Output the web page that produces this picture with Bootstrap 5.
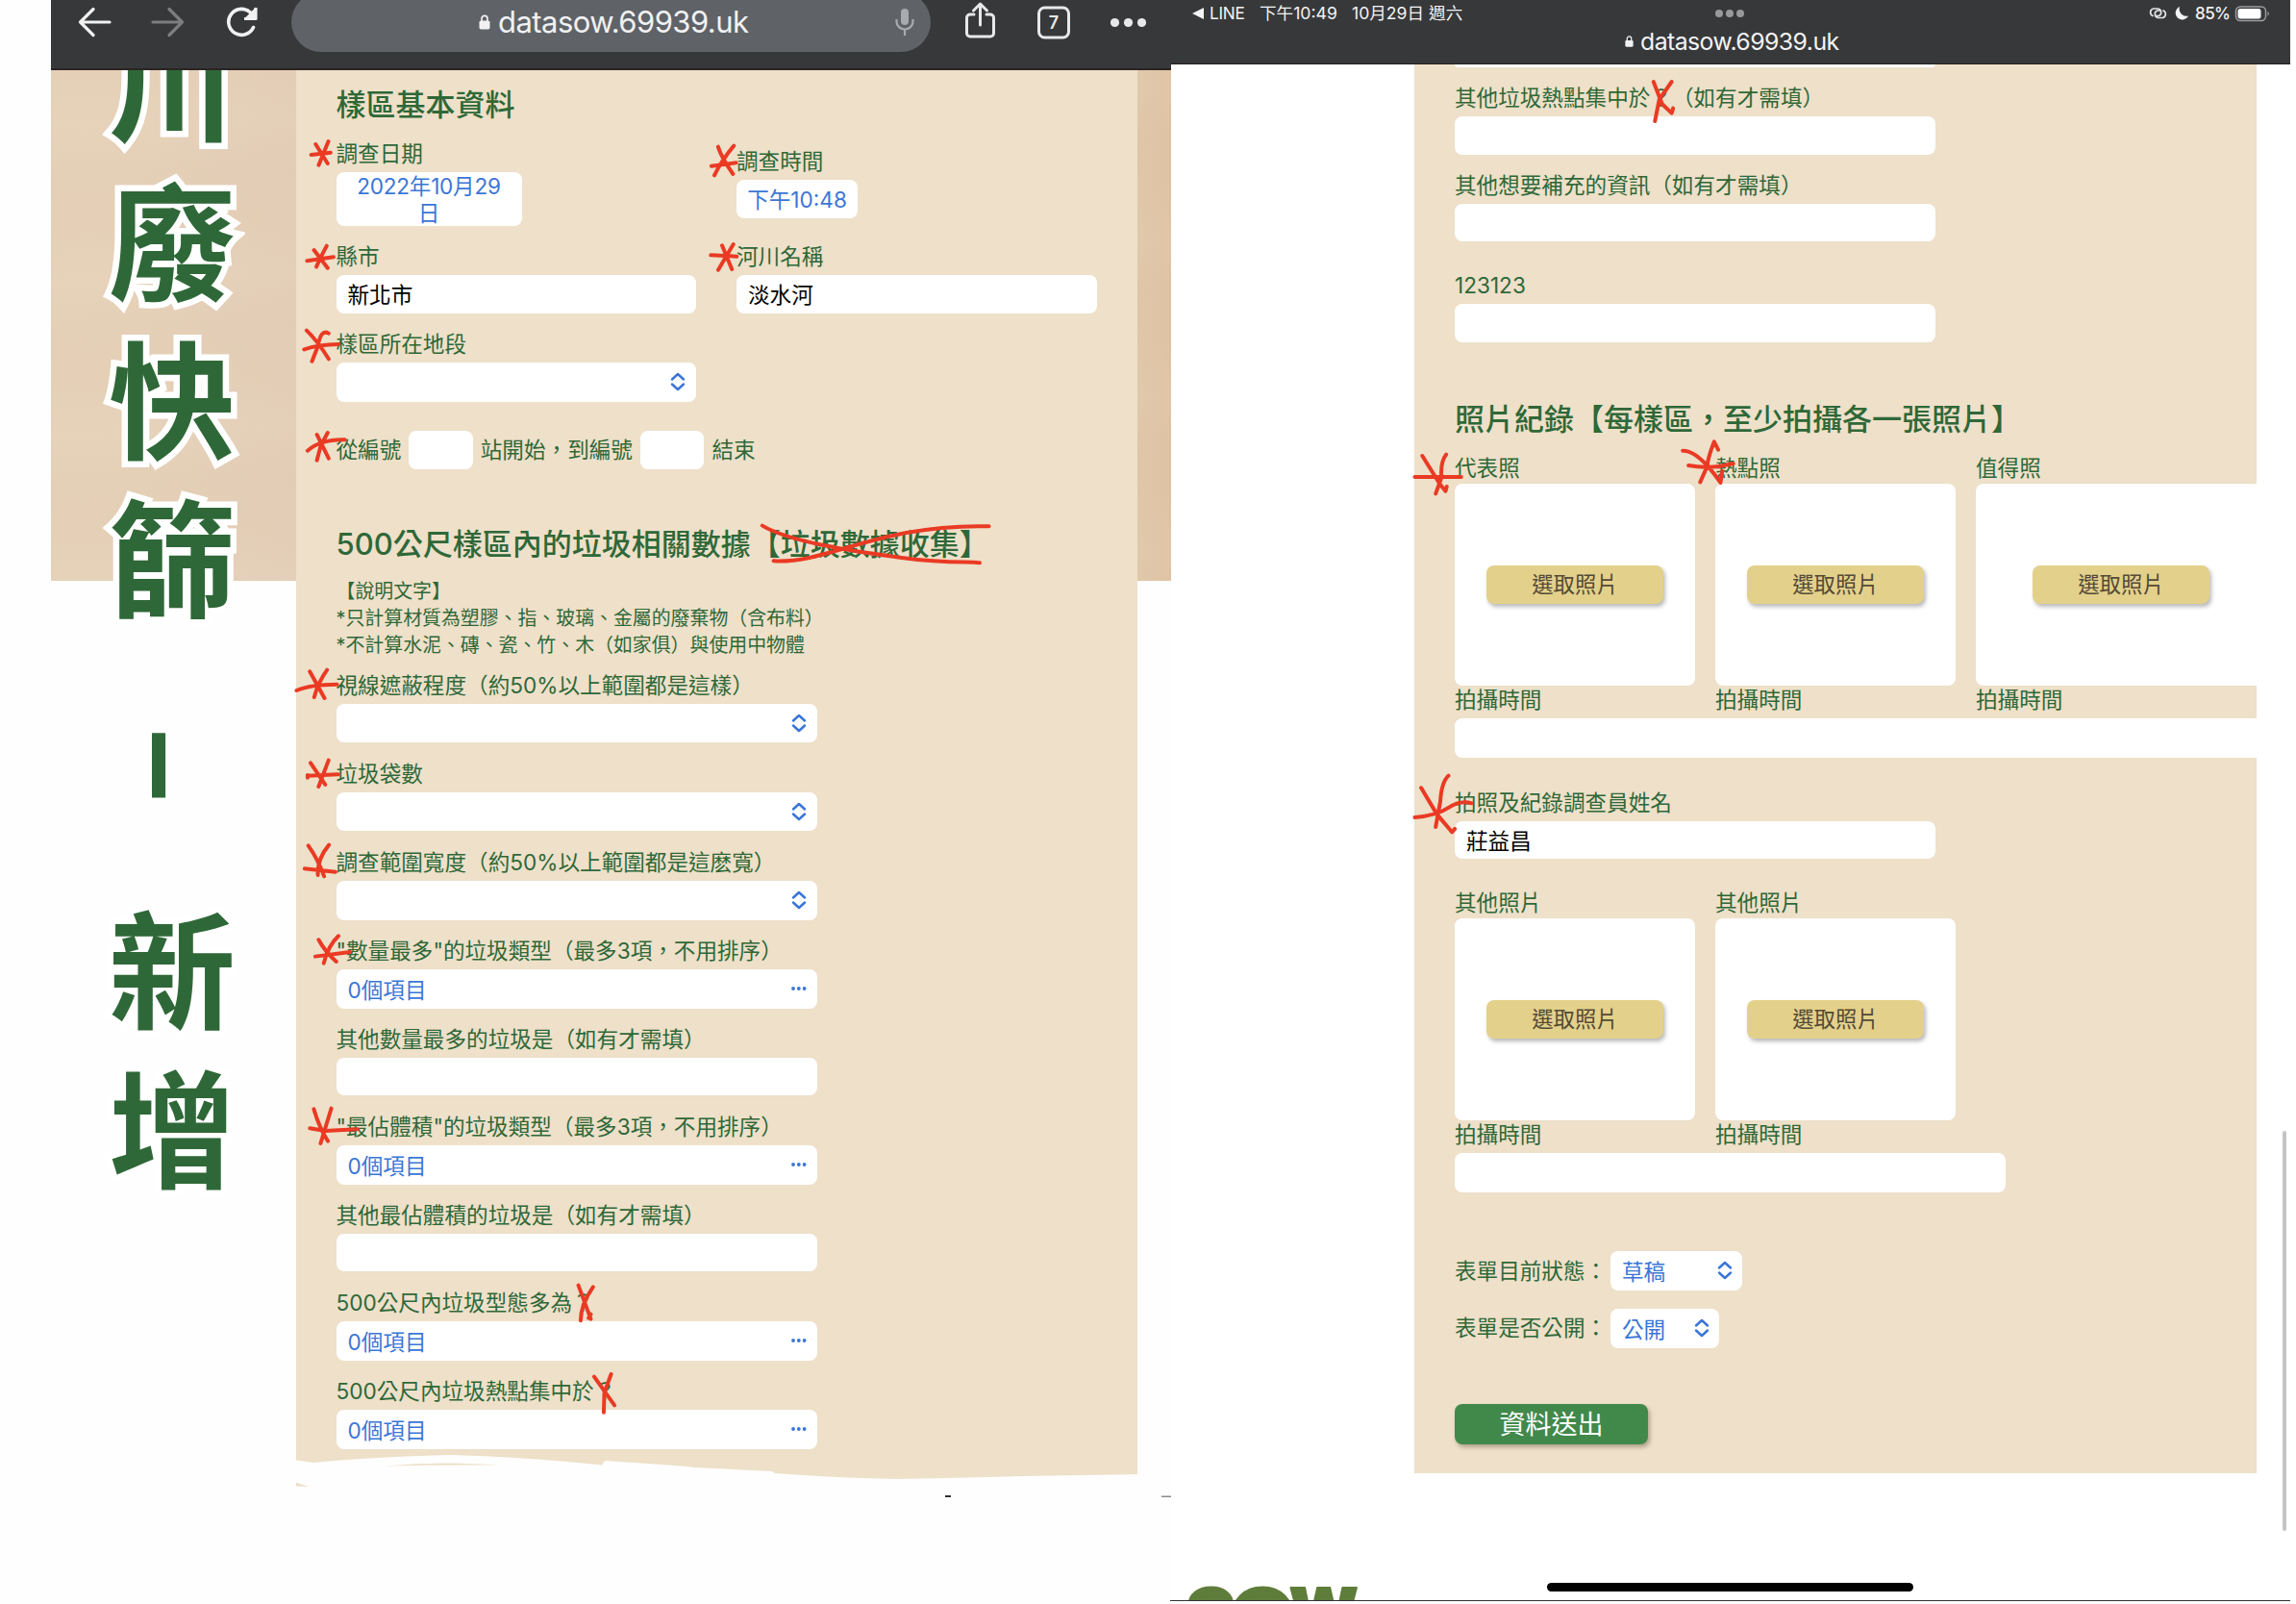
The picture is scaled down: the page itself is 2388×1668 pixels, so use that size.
<!DOCTYPE html>
<html lang="zh-Hant">
<head>
<meta charset="utf-8">
<title>川廢快篩 - 新增</title>
<link href="https://cdn.jsdelivr.net/npm/bootstrap@5.3.0/dist/css/bootstrap.min.css" rel="stylesheet">
<style>
:root{--leaf:#2f6838;--sand:#eee0c9;--bar:#37383a;--sky:#3b76d6}
body{width:2388px;height:1668px;overflow:hidden;background:#fefefe;font-family:Inter,"Noto Sans CJK TC",sans-serif;font-size:22.6px;line-height:30px;color:var(--leaf)}
svg{display:block;flex:none}
.pane-left{width:1165px;margin-left:53px;height:1668px;flex:none}
.pane-right{width:1170px;height:1668px;flex:none}
.bar-left{height:73px;background:var(--bar);z-index:2;border-bottom:2px solid #2b2523}
.pill{width:665px;height:62px;margin-top:-8px;border-radius:31px;background:#5f6368;color:#f1f1f2;font-size:31px;letter-spacing:-.55px}
.bar-right{height:67px;width:1164px;background:var(--bar);color:#f3f3f4;z-index:2;border-bottom:1px solid #261d1b}
.status-row{height:28px;font-size:17.2px;line-height:28px}
.wood{height:531px;left:0;right:0;top:73px;background:
 repeating-linear-gradient(178deg,rgba(225,200,160,.05) 0,rgba(255,240,220,.06) 60px,rgba(215,185,160,.05) 110px,rgba(225,200,160,.05) 160px),
 linear-gradient(90deg,#e5d0b8 0 8%,#e3cdb7 22%,#e0c9ae 95%,#dec3a3)}
.side-title{width:254.5px;padding-left:60px;margin-top:-66px;font-size:132px;font-weight:700;z-index:1}
.side-title span{display:block;width:136px;height:165px;line-height:165px;position:relative;z-index:0;color:var(--leaf)}
.side-title span[data-c]::before{content:attr(data-c);position:absolute;inset:0;z-index:-1;color:#fff;-webkit-text-stroke:13px #fff}
.side-title .dash{height:263px;width:148px;line-height:148px;font-size:150px;padding-bottom:6px;writing-mode:vertical-rl;text-align:center;font-family:"Noto Sans CJK TC"}
.sheet-left{width:875.5px;height:1474px;padding:16px 42px 0;background:var(--sand);position:relative}
.sheet-right{width:876px;height:1465px;margin-left:253px;padding-left:42px;background:var(--sand);overflow:hidden}
.sec-title{font-size:31px;line-height:40px;font-weight:500;color:var(--leaf);margin:0;white-space:nowrap}
.note-text{font-size:19.9px;line-height:28px;margin:15px 0 12.6px;white-space:nowrap}
.fld{margin-bottom:17.4px}
.cap{display:block;height:34px;white-space:nowrap}
.box,.pick{background:#fff;border-radius:8px;height:39.5px;padding:0 12px;display:flex;align-items:center;color:#000;line-height:39px;padding-top:2px}
.pick{height:40.7px;justify-content:space-between;color:var(--sky);padding-right:11px}
.pick svg{margin-top:-3px}
.w374{width:374.5px}.w500{width:500px}.w67{width:66.5px}
.shot{background:#fff;border-radius:8px;height:210px;width:250px}
.shot-wide{width:302px}
.btn-shot{width:184px;height:40px;padding:0;background:#e3d18b;color:#544a36;border:0;border-radius:8px;font-size:22.4px;line-height:40px;box-shadow:2px 3px 4px rgba(0,0,0,.28)}
.btn-send{width:201px;height:42px;padding:0;background:#41894b;color:#fff;border:0;border-radius:8px;font-size:27px;line-height:44px;box-shadow:2px 3px 4px rgba(60,50,20,.35)}
.shots{gap:21px}
.home-bar{left:391px;top:1645.5px;width:381px;height:9px;border-radius:5px;background:#000}
.scroll-thumb{left:1156px;top:1176px;width:4px;height:416px;border-radius:2px;background:#c4c4c4}
.logo-cut{left:-1px;top:1640px;height:25px;width:1165px;overflow:hidden;border-bottom:1.5px solid #333}
.ink{left:0;top:0;z-index:5;pointer-events:none}
.ink .pen path{fill:none;stroke:#ea3a24;stroke-width:4;stroke-linecap:round;stroke-linejoin:round;vector-effect:non-scaling-stroke}
</style>
<script src="https://cdn.jsdelivr.net/npm/bootstrap@5.3.0/dist/js/bootstrap.bundle.min.js"></script>
</head>
<body class="position-relative">
<svg width="0" height="0" class="position-absolute">
 <symbol id="updown" viewBox="0 0 16 20"><path d="M2 7.500 8 2l6 5.500M2 12.500 8 18l6-5.500" fill="none" stroke="#3b76d6" stroke-width="2.500" stroke-linecap="round" stroke-linejoin="round"/></symbol>
 <symbol id="more" viewBox="0 0 16 4"><g fill="#3b76d6"><circle cx="2" cy="2" r="1.900"/><circle cx="7.800" cy="2" r="1.900"/><circle cx="13.600" cy="2" r="1.900"/></g></symbol>
 <symbol id="lock" viewBox="0 0 12 16"><rect x="0.500" y="6.500" width="11" height="9" rx="1.800" fill="#f1f1f2"/><path d="M3 7V4.300a3 3 0 0 1 6 0V7" fill="none" stroke="#f1f1f2" stroke-width="1.700"/></symbol>
</svg>

<main class="d-flex">
 <section class="pane-left position-relative d-flex flex-column">
  <header class="bar-left position-relative flex-shrink-0 d-flex">
   <svg width="250" height="60" viewBox="53 0 250 60" fill="none" stroke-width="3.200" stroke-linecap="round" stroke-linejoin="round">
    <path d="M114 23H84M97 9.500 83.500 23 97 36.500" stroke="#f1f1f2"/>
    <path d="M159 23h30M176 9.500 189.500 23 176 36.500" stroke="#7d7e80"/>
    <path d="M263.500 28.500A13.500 13.500 0 1 1 261 13.500L265 17.500" stroke="#f1f1f2" stroke-width="3.600"/><path d="M266 7.500v12h-12z" fill="#f1f1f2" stroke="none"/><path d="M266 8v11.500h-12" stroke="#f1f1f2" stroke-linecap="butt"/>
   </svg>
   <div class="pill position-relative d-flex align-items-center">
    <svg width="12" height="16" style="margin-left:195px"><use href="#lock"/></svg>
    <span class="ms-2">datasow.69939.uk</span>
    <svg class="ms-auto" width="20" height="28" viewBox="0 0 20 28" style="margin-right:17px"><rect x="6" y="0" width="8" height="17" rx="4" fill="#a9aaad"/><path d="M1.500 11v2.500a8.500 8 0 0 0 17 0V11M10 21.500V28" fill="none" stroke="#a9aaad" stroke-width="2.200"/></svg>
   </div>
   <svg width="245" height="60" viewBox="968 0 245 60" fill="none" stroke="#e8e8ea" stroke-width="3" stroke-linecap="round" stroke-linejoin="round">
    <path d="M1013 15h-4a3.500 3.500 0 0 0-3.500 3.500v16a3.500 3.500 0 0 0 3.500 3.500h21a3.500 3.500 0 0 0 3.500-3.500v-16a3.500 3.500 0 0 0-3.500-3.500h-4M1019.500 26V5M1012.500 11l7-7 7 7"/>
    <rect x="1080.500" y="8" width="31" height="31" rx="6"/>
    <text x="1096" y="30" text-anchor="middle" font-family="Inter" font-weight="600" font-size="18" fill="#e8e8ea" stroke="none">7</text>
    <g fill="#e8e8ea" stroke="none"><circle cx="1159.500" cy="23.500" r="4.600"/><circle cx="1173.500" cy="23.500" r="4.600"/><circle cx="1187.500" cy="23.500" r="4.600"/></g>
   </svg>
  </header>
  <div class="wood position-absolute"></div>
  <div class="d-flex">
   <h1 class="side-title mb-0 position-relative flex-shrink-0">
    <span data-c="川">川</span><span data-c="廢">廢</span><span data-c="快">快</span><span data-c="篩">篩</span><span class="dash">–</span><span data-c="新">新</span><span data-c="增">增</span>
   </h1>
   <form class="sheet-left flex-shrink-0">
    <h2 class="sec-title mb-3">樣區基本資料</h2>
    <div class="d-flex align-items-center" style="gap:42px;margin-bottom:17px">
     <div class="w374"><label class="cap">調查日期</label><div class="box justify-content-center text-center" style="width:193px;height:56px;line-height:28px;color:var(--sky);padding:1px 18px 0;letter-spacing:-.25px">2022年10月29日</div></div>
     <div class="w374"><label class="cap">調查時間</label><div class="box justify-content-center px-0 pt-0" style="width:126px;color:var(--sky)">下午10:48</div></div>
    </div>
    <div class="d-flex fld" style="gap:42px">
     <div class="w374"><label class="cap">縣市</label><div class="box">新北市</div></div>
     <div class="w374"><label class="cap">河川名稱</label><div class="box">淡水河</div></div>
    </div>
    <div class="w374"><label class="cap">樣區所在地段</label><div class="pick"><span></span><svg width="16" height="20"><use href="#updown"/></svg></div></div>
    <div class="d-flex align-items-center" style="gap:8px;margin:30.500px 0 58.500px"><span>從編號</span><div class="box w67"></div><span>站開始，到編號</span><div class="box w67"></div><span>結束</span></div>
    <h2 class="sec-title">500公尺樣區內的垃圾相關數據【垃圾數據收集】</h2>
    <p class="note-text">【說明文字】<br>*只計算材質為塑膠、指、玻璃、金屬的廢棄物（含布料）<br>*不計算水泥、磚、瓷、竹、木（如家俱）與使用中物體</p>
    <div class="w500">
     <div class="fld"><label class="cap">視線遮蔽程度（約50%以上範圍都是這樣）</label><div class="pick"><span></span><svg width="16" height="20"><use href="#updown"/></svg></div></div>
     <div class="fld"><label class="cap">垃圾袋數</label><div class="pick"><span></span><svg width="16" height="20"><use href="#updown"/></svg></div></div>
     <div class="fld"><label class="cap">調查範圍寬度（約50%以上範圍都是這麽寬）</label><div class="pick"><span></span><svg width="16" height="20"><use href="#updown"/></svg></div></div>
     <div class="fld"><label class="cap">"數量最多"的垃圾類型（最多3項，不用排序）</label><div class="pick">0個項目<svg width="16" height="4"><use href="#more"/></svg></div></div>
     <div class="fld"><label class="cap">其他數量最多的垃圾是（如有才需填）</label><div class="box"></div></div>
     <div class="fld"><label class="cap">"最佔體積"的垃圾類型（最多3項，不用排序）</label><div class="pick">0個項目<svg width="16" height="4"><use href="#more"/></svg></div></div>
     <div class="fld"><label class="cap">其他最佔體積的垃圾是（如有才需填）</label><div class="box"></div></div>
     <div class="fld"><label class="cap">500公尺內垃圾型態多為？</label><div class="pick">0個項目<svg width="16" height="4"><use href="#more"/></svg></div></div>
     <div><label class="cap">500公尺內垃圾熱點集中於？</label><div class="pick">0個項目<svg width="16" height="4"><use href="#more"/></svg></div></div>
    </div>
   </form>
  </div>
 </section>

 <section class="pane-right position-relative bg-white">
  <header class="bar-right position-relative">
   <div class="status-row d-flex align-items-center">
    <svg width="12" height="14" viewBox="0 0 12 14" style="margin:0 6px 0 22px"><path d="M12 1v12L0 7z" fill="#f3f3f4"/></svg>
    <span style="width:52px;letter-spacing:-.3px">LINE</span><span style="width:96px;font-size:17.600px">下午10:49</span><span style="font-size:17.600px">10月29日 週六</span>
    <svg class="position-absolute" width="32" height="10" style="left:565px;top:9px" fill="#98999b"><circle cx="5" cy="5" r="4"/><circle cx="16" cy="5" r="4"/><circle cx="27" cy="5" r="4"/></svg>
    <svg class="ms-auto" width="132" height="28" viewBox="2233 0 132 28" style="margin-right:17px">
     <g fill="none" stroke="#e4e4e5" stroke-width="1.700" stroke-linecap="round"><path d="M2239 16.500a4 4 0 0 1 .5-7.500h5a4 4 0 0 1 1 7.500h-3M2250 11a4 4 0 0 1-.5 7.500h-5a4 4 0 0 1-1-7.500h3"/><rect x="2325.500" y="7" width="31" height="14.500" rx="4.500" stroke="#9c9d9f" stroke-width="1.500"/></g>
     <path d="M2267 7a7 7 0 1 0 9 9.500A7.500 7.500 0 0 1 2267 7z" fill="#f3f3f4"/>
     <text x="2283" y="20" font-family="Inter" font-size="17" font-weight="500" fill="#f3f3f4" textLength="37">85%</text>
     <rect x="2327.500" y="9" width="24" height="10.500" rx="2.500" fill="#fff"/><path d="M2358.500 12q3 2.200 0 4.500z" fill="#9c9d9f"/>
    </svg>
   </div>
   <div class="d-flex align-items-center" style="height:30px;padding-left:472px;font-size:24.800px;letter-spacing:-.55px"><svg width="9" height="12" viewBox="0 0 12 16" style="margin-right:7px"><use href="#lock"/></svg>datasow.69939.uk</div>
  </header>
  <form class="sheet-right">
   <div class="w500 bg-white rounded-bottom-2" style="height:3px;margin-bottom:17px"></div>
   <div class="w500">
    <div class="fld"><label class="cap">其他垃圾熱點集中於？（如有才需填）</label><div class="box"></div></div>
    <div style="margin-bottom:31px"><label class="cap">其他想要補充的資訊（如有才需填）</label><div class="box"></div></div>
    <div style="margin-bottom:60.500px"><label class="cap">123123</label><div class="box"></div></div>
   </div>
   <h2 class="sec-title" style="margin-bottom:15.500px">照片紀錄【每樣區，至少拍攝各一張照片】</h2>
   <div class="d-flex shots">
    <div><label class="cap" style="height:31px">代表照</label><div class="shot d-flex align-items-center justify-content-center"><button type="button" class="btn btn-shot">選取照片</button></div><label class="cap">拍攝時間</label></div>
    <div><label class="cap" style="height:31px">熱點照</label><div class="shot d-flex align-items-center justify-content-center"><button type="button" class="btn btn-shot">選取照片</button></div><label class="cap">拍攝時間</label></div>
    <div><label class="cap" style="height:31px">值得照</label><div class="shot shot-wide d-flex align-items-center justify-content-center"><button type="button" class="btn btn-shot">選取照片</button></div><label class="cap">拍攝時間</label></div>
   </div>
   <div class="pick" style="width:860px;margin-bottom:32px"></div>
   <div class="w500" style="margin-bottom:31px"><label class="cap">拍照及紀錄調查員姓名</label><div class="box">莊益昌</div></div>
   <div class="d-flex shots">
    <div><label class="cap" style="height:31px">其他照片</label><div class="shot d-flex align-items-center justify-content-center"><button type="button" class="btn btn-shot">選取照片</button></div><label class="cap">拍攝時間</label></div>
    <div><label class="cap" style="height:31px">其他照片</label><div class="shot d-flex align-items-center justify-content-center"><button type="button" class="btn btn-shot">選取照片</button></div><label class="cap">拍攝時間</label></div>
   </div>
   <div class="pick" style="width:573px;margin-bottom:61.500px"></div>
   <div class="d-flex align-items-center" style="margin-bottom:19px"><span style="width:162px">表單目前狀態：</span><div class="pick" style="width:137px;padding-right:10px">草稿<svg width="16" height="20"><use href="#updown"/></svg></div></div>
   <div class="d-flex align-items-center" style="margin-bottom:58.500px"><span style="width:162px">表單是否公開：</span><div class="pick" style="width:113px;padding-right:10px">公開<svg width="16" height="20"><use href="#updown"/></svg></div></div>
   <button type="button" class="btn btn-send">資料送出</button>
  </form>
  <div class="scroll-thumb position-absolute"></div>
  <div class="logo-cut position-absolute">
   <svg width="260" height="25" viewBox="1217 1640 260 25" font-family="Inter" font-weight="900" fill="#5f7d3a" stroke="#5f7d3a" stroke-linejoin="round"><text><tspan x="1234.500" y="1707" font-size="74" stroke-width="5">S</tspan><tspan x="1279" y="1717" font-size="88" stroke-width="5">O</tspan><tspan x="1341" y="1699" font-size="66" stroke-width="2">W</tspan></text></svg>
  </div>
  <div class="home-bar position-absolute"></div>
 </section>
</main>

<svg class="ink position-absolute" width="2388" height="1668" viewBox="0 0 2388 1668">
 <!-- white brush along the bottom of the left form -->
 <path fill="#fefefe" d="M300 1518L308 1518.500 326 1521Q388 1515 470 1513Q540 1515 600 1521L626 1523.500 629 1519Q720 1525 722 1526L803 1530 806 1532Q870 1537 934 1538Q1000 1537 1063 1535L1190 1533V1560H300z"/>
 <path fill="#eee0c9" d="M401 1524.500Q460 1519 517 1523.500Q460 1523 401 1524.500zM308 1541.500 321 1546 308 1545.500z"/>
 <rect x="983" y="1555" width="6" height="2" fill="#333"/><rect x="1208" y="1555.500" width="10" height="1.500" fill="#8a8a8a"/>
 <g class="pen">
 <g transform="scale(.778 .3333)"><path d="M439 441 426 515M422 450 438 510M416 483 442 476M981 455Q965 500 955 547M960 458Q964 490 980 543M951 518 984 508"/></g>
 <g transform="translate(300 240) scale(.5102 .3333)"><path d="M52 60 80 116M78 47 65 85 57 112M38 94 92 82M884 46 904 120M907 42 876 122M861 76 914 80M37 311Q60 345 82 400M82 320Q66 305 60 360L48 407M32 370Q60 355 102 354M58 636 82 710M80 630 66 670 58 716M39 686Q66 650 115 652"/><path d="M966 920C1020 970 1150 1000 1250 1020S1390 1030 1409 1036M989 1030C1100 1040 1200 915 1428 922"/></g>
 <g transform="translate(300 680) scale(.3827 .3333)"><path d="M58 55 98 138M105 50Q80 90 70 135M22 114Q60 95 132 95M60 340 100 408M109 332 82 414M52 378 52 386M52 380 135 376M54 598Q80 640 97 694M110 596Q78 640 80 690M44 670 128 680M82 892Q100 930 130 960M136 880Q108 910 96 965M73 944 168 930"/></g>
 <g transform="translate(300 1120) scale(.5867 .3333)"><path d="M45 100Q55 160 70 200M76 98 57 207M38 160 65 168 122 163M514 650 536 755M540 655Q518 710 518 760M536 740 532 752M542 935 578 1024M572 927 560 985 559 1046"/></g>
 <g transform="translate(1200 0) scale(.7576 .3333)"><path d="M686 255 698 325 711 353 713 338M711 255 694 310 688 378"/></g>
 <g transform="translate(1440 400) scale(.6046 .3333)"><path d="M65 222 95 310 105 332 107 318M106 218Q96 240 98 290L88 340M52 288 132 288M513 206Q540 205 578 306L581 270M574 203 567 178Q556 230 555 255L543 304M523 252Q560 265 600 246M63 1258 90 1340 116 1396 121 1386M110 1220Q98 1240 96 1300L88 1380M52 1350Q90 1345 110 1320T150 1306"/></g>
 </g>
</svg>
</body>
</html>
